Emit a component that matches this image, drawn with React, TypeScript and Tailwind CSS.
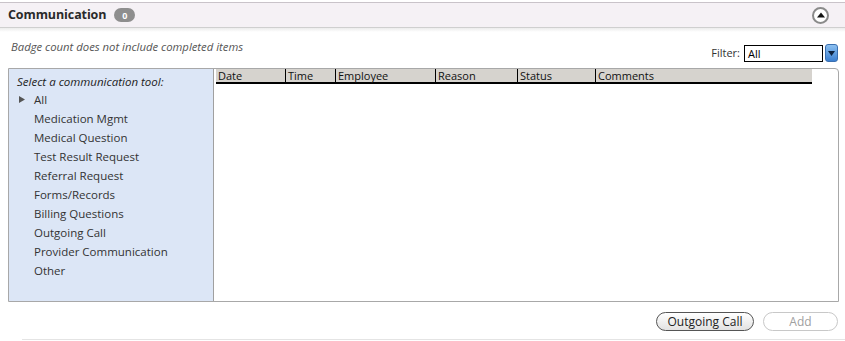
const tools = [
  "All",
  "Medication Mgmt",
  "Medical Question",
  "Test Result Request",
  "Referral Request",
  "Forms/Records",
  "Billing Questions",
  "Outgoing Call",
  "Provider Communication",
  "Other",
];

const columns = [
  { label: "Date", w: "w-[70px]" },
  { label: "Time", w: "w-[50px]" },
  { label: "Employee", w: "w-[100px]" },
  { label: "Reason", w: "w-[82px]" },
  { label: "Status", w: "w-[78px]" },
  { label: "Comments", w: "w-[216px]" },
];

export default function App() {
  return (
    <div className="w-[845px] h-[341px] bg-white font-['Open_Sans',sans-serif] text-[#222] overflow-hidden">
      {/* Header */}
      <div className="mt-[2px] h-[26px] bg-[#f5f1f5] border-t border-[#c9c3c9] border-b border-b-[#cfcfcf] flex items-center pl-[8px] pr-[16px]">
        <span className="text-[12.5px] font-bold text-[#2a2a2a] tracking-[-0.1px]">Communication</span>
        <span className="ml-[8px] h-[14px] w-[21px] rounded-full bg-[#8e8e8e] text-white text-[9px] font-bold flex items-center justify-center leading-none">
          0
        </span>
        <div className="ml-auto w-[17px] h-[17px] rounded-full border-[2px] border-double border-[#8a8a8a] bg-white flex items-center justify-center">
          <svg width="8" height="6" viewBox="0 0 8 6">
            <path d="M0 5.5 L4 0.5 L8 5.5 Z" fill="#111" />
          </svg>
        </div>
      </div>
      <div className="h-[4px] bg-gradient-to-b from-[#ececec] to-white" />

      {/* Sub header */}
      <div className="flex items-end pl-[11px] pr-[7px] h-[36px]">
        <span className="text-[11.3px] italic text-[#555] mb-[12px]">Badge count does not include completed items</span>
        <div className="ml-auto flex items-center mb-[6px]">
          <span className="text-[11px] text-[#333] mr-[4px]">Filter:</span>
          <div className="w-[79px] h-[17px] border border-black bg-white text-[11px] leading-[15px] pl-[3px] text-black">All</div>
          <div className="ml-[2px] w-[13px] h-[18px] rounded-[3px] bg-gradient-to-b from-[#8cc0f0] to-[#3b7fd0] border border-[#3a6fb0] flex items-center justify-center">
            <svg width="7" height="5" viewBox="0 0 7 5">
              <path d="M0 0 L7 0 L3.5 5 Z" fill="#0d2240" />
            </svg>
          </div>
        </div>
      </div>

      {/* Main box */}
      <div className="ml-[8px] w-[831px] h-[234px] border border-[#a8a8a8] rounded-tr-[4px] flex">
        <div className="w-[205px] bg-[#dce6f6] border-r border-[#a0a0a0] pt-[5px] pl-[8px]">
          <div className="text-[11.5px] italic text-[#222] h-[16px] leading-[16px]">Select a communication tool:</div>
          {tools.map((t, i) => (
            <div key={t} className="h-[19px] flex items-center text-[11.5px] text-[#333]">
              <span className="w-[17px] pl-[2px] flex items-center">
                {i === 0 && (
                  <svg width="6" height="7" viewBox="0 0 6 7">
                    <path d="M0 0 L6 3.5 L0 7 Z" fill="#555" />
                  </svg>
                )}
              </span>
              {t}
            </div>
          ))}
        </div>
        <div className="flex-1 pl-[2px]">
          <div className="flex h-[15px] bg-[#d6d3ce] border-b-[2px] border-black w-[596px]">
            {columns.map((c, i) => (
              <div
                key={c.label}
                className={`${c.w} text-[11px] leading-[13px] pl-[2px] text-[#111] ${i < columns.length - 1 ? "border-r border-black" : ""}`}
              >
                {c.label}
              </div>
            ))}
          </div>
        </div>
      </div>

      {/* Buttons */}
      <div className="flex justify-end gap-[9px] pr-[7px] mt-[10px]">
        <button className="w-[98px] h-[19px] rounded-full border border-[#555] bg-gradient-to-b from-white to-[#e2e2e2] text-[12px] leading-[16px] text-[#222]">
          Outgoing Call
        </button>
        <button className="w-[75px] h-[19px] rounded-full border border-[#c8c8c8] bg-white text-[12px] leading-[16px] text-[#a0a0a0]">
          Add
        </button>
      </div>
      <div className="ml-[22px] mt-[8px] border-t border-[#e4e4e4]" />
    </div>
  );
}
